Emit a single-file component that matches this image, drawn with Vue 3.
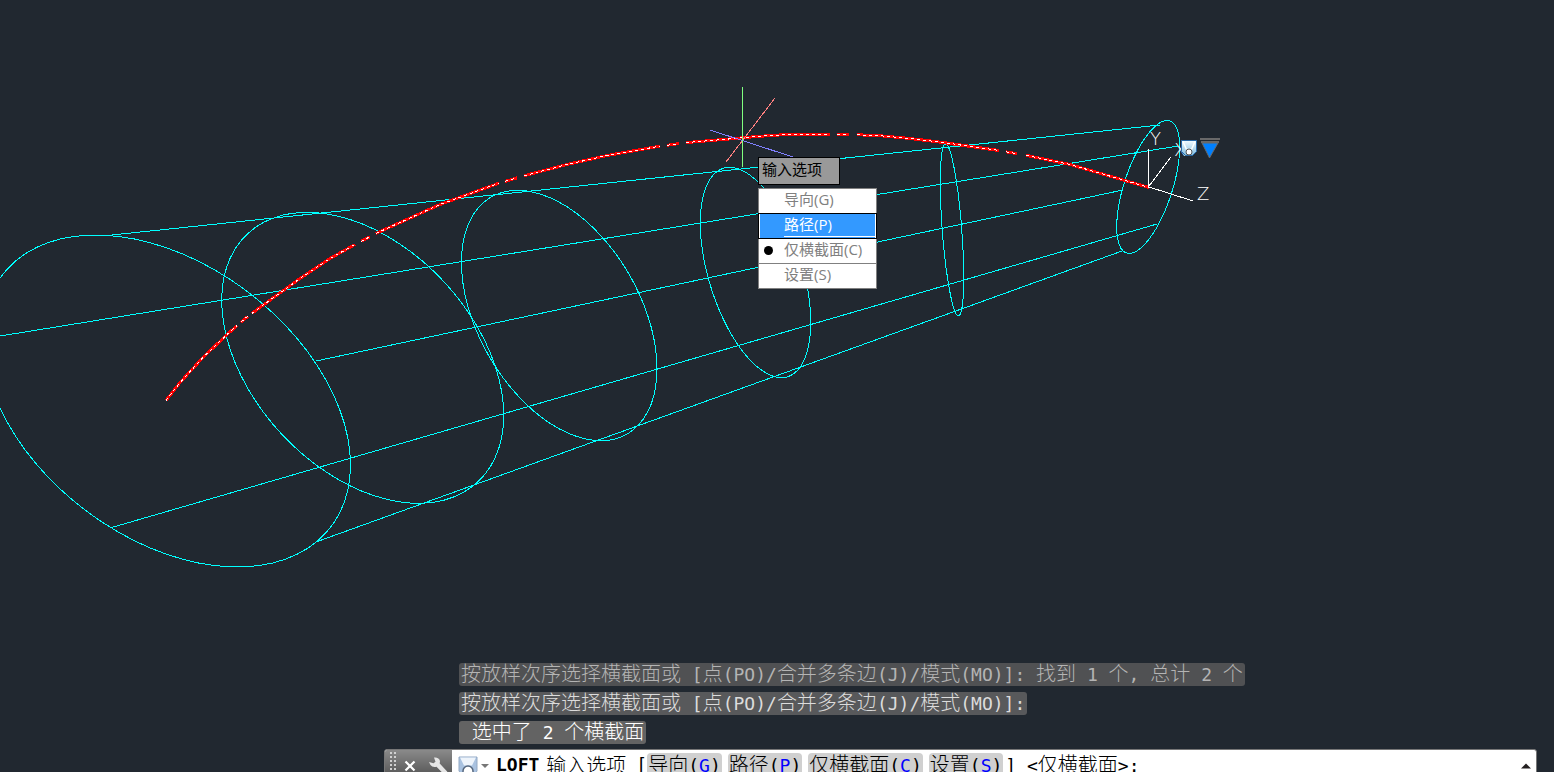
<template>
  <main class="workspace">
    <svg class="model" aria-label="Loft preview" role="img">
      <g class="wire">
        <polygon v-for="(s, i) in sections" :key="'s' + i" :points="sectionPoints(s)" />
        <line
          v-for="(e, i) in edges"
          :key="'e' + i"
          :x1="e[0]" :y1="e[1]" :x2="e[2]" :y2="e[3]"
        />
      </g>

      <!-- loft path, drawn as a highlighted dash-dot curve -->
      <g v-for="(points, i) in pathSegments" :key="'p' + i">
        <polyline class="path-glow" :points="points" />
        <polyline class="path-core" :points="points" />
      </g>

      <!-- 3D cursor -->
      <line class="axis-red" x1="775" y1="98" x2="726" y2="162" />
      <line class="axis-blue" x1="710" y1="130" x2="793" y2="157" />
      <line class="axis-green" x1="742.5" y1="87" x2="742.5" y2="167" />

      <!-- UCS icon -->
      <g class="ucs">
        <line x1="1148.5" y1="149" x2="1148.5" y2="187" />
        <line x1="1149" y1="187" x2="1193" y2="201" />
        <line x1="1149" y1="186" x2="1171" y2="157" />
        <text x="1150" y="145">Y</text>
        <text x="1174" y="156">X</text>
        <text x="1197" y="200">Z</text>
      </g>

      <!-- loft glyph and grip -->
      <defs>
        <linearGradient id="loftFill" x1="0" y1="0" x2="0" y2="1">
          <stop offset="0" stop-color="#f4fbff" />
          <stop offset="1" stop-color="#7dbbe0" />
        </linearGradient>
      </defs>
      <path d="M1181.5 140.5h15v11l-4 4h-7l-4-4z" fill="url(#loftFill)" stroke="#2768a8" />
      <path d="M1183 141.500l3.500 8h5l3.500-8" stroke="#fff" stroke-width="1.500" fill="none" />
      <circle cx="1189" cy="152" r="3" fill="#fff" stroke="#555" />
      <path d="M1200 139h20M1201 142h18" stroke="#696969" stroke-width="2" />
      <path d="M1202 143h16l-8.500 15z" fill="#0080ff" stroke="#696969" />
    </svg>

    <section class="dynamic-input">
      <h1 class="prompt-tip">输入选项</h1>
      <ul class="options">
        <li v-for="o in options" :key="o.key">
          <button
            type="button"
            :class="['option', { active: o.key === active }]"
            @click="active = o.key"
          >
            <span class="mark"><i v-if="o.key === current" class="dot"></i></span>
            <span class="label">{{ o.name }}({{ o.key }})</span>
          </button>
        </li>
      </ul>
    </section>

    <section class="console">
      <div class="history">
        <p v-for="(line, i) in history" :key="i" :class="['history-line', 'age-' + (history.length - 1 - i)]">
          <span v-for="(r, j) in runs(line)" :key="j" :class="{ latin: !isHan(r) }">{{ r }}</span>
        </p>
      </div>

      <div class="command-bar">
        <div class="handle">
          <span class="grip"></span>
          <button type="button" class="tool" aria-label="Close">
            <svg width="14" height="14" viewBox="0 0 14 14">
              <path d="M2.500 2.500l9 9M11.500 2.500l-9 9" stroke="#fff" stroke-width="2.200" />
            </svg>
          </button>
          <button type="button" class="tool" aria-label="Customize">
            <svg width="20" height="20" viewBox="0 0 20 20">
              <path
                d="M6 1.500q5-.5 6 3.500l-.3 2.500 7 7.500a2 2 0 0 1-3 3l-7.200-7.200q-4 1-6-1.800L1 6l4.500 1.300 2-1.600z"
                fill="#e6e6e6"
              />
            </svg>
          </button>
        </div>
        <div class="command-line">
          <button type="button" class="recent" aria-label="Recent commands">
            <svg width="32" height="20" viewBox="0 0 32 20">
              <path d="M1 1h18v14l-3 4H4l-3-4z" fill="#a9c2e0" stroke="#93a9c4" />
              <path d="M2 1.500h16l-4 8H6z" fill="#eef4fb" />
              <path d="M5 18v-3a5 5 0 0 1 10 0v3" fill="#fff" stroke="#56677e" stroke-width="1.500" />
              <path d="M23 8h8l-4 4z" fill="#777" />
            </svg>
          </button>
          <label for="command" class="prompt">
            <b class="latin">LOFT</b>
            <span>输入选项</span>
            <span class="latin">[</span>
          </label>
          <span class="keywords">
            <button v-for="o in options" :key="o.key" type="button" class="keyword" @click="active = o.key">
              {{ o.name }}<span class="latin">(<em>{{ o.key }}</em>)</span>
            </button>
          </span>
          <span class="default"><span class="latin">] &lt;</span>仅横截面<span class="latin">&gt;:</span></span>
          <input id="command" v-model="command" type="text" autocomplete="off" />
          <button type="button" class="expand" aria-label="Expand history">
            <svg width="10" height="6" viewBox="0 0 10 6"><path d="M0 5.500l5-5 5 5z" fill="#231f20" /></svg>
          </button>
        </div>
      </div>
    </section>
  </main>
</template>

<script setup>
import { ref } from 'vue'

const command = ref('')
const active = ref('P')
const current = 'C'

const options = [
  { name: '导向', key: 'G' },
  { name: '路径', key: 'P' },
  { name: '仅横截面', key: 'C' },
  { name: '设置', key: 'S' }
]

const history = [
  '按放样次序选择横截面或 [点(PO)/合并多条边(J)/模式(MO)]: 找到 1 个, 总计 2 个',
  '按放样次序选择横截面或 [点(PO)/合并多条边(J)/模式(MO)]:',
  ' 选中了 2 个横截面'
]

const isHan = (text) => /[\u4e00-\u9fff]/.test(text)
const runs = (text) => text.match(/[\u4e00-\u9fff]+|[^\u4e00-\u9fff]+/g)

// centre, half width, half height and skew of each projected circle
const sections = [
  { cx: 166.5, cy: 401, w: 184, h: 166, skew: 0.385 },
  { cx: 362.7, cy: 357.8, w: 141, h: 145.5, skew: 0.395 },
  { cx: 559.2, cy: 315.5, w: 97.8, h: 125.2, skew: 0.425 },
  { cx: 755.5, cy: 272.5, w: 55.2, h: 105.2, skew: 0.47 },
  { cx: 952, cy: 230, w: 11.7, h: 86, skew: 0.55 },
  { cx: 1148.2, cy: 187, w: 31.5, h: 66.5, skew: -0.6 }
]

const sectionPoints = ({ cx, cy, w, h, skew }) => {
  const side = Math.sqrt(1 - skew * skew)
  const points = []
  for (let i = 0; i < 72; i++) {
    const t = (i / 72) * Math.PI * 2
    const x = cx + w * Math.cos(t)
    const y = cy + h * (skew * Math.cos(t) + side * Math.sin(t))
    points.push(x.toFixed(1) + ',' + y.toFixed(1))
  }
  return points.join(' ')
}

const edges = [
  [112, 235, 1160, 125],
  [0, 336, 1178, 146],
  [316, 361, 1123, 190],
  [110, 528, 1157, 224],
  [316, 542, 1122, 251]
]

const curve = [
  [166, 400], [180, 382], [203, 357], [226, 335], [245, 318], [264, 304], [300, 278],
  [330, 258], [355, 244], [378, 232], [440, 204], [498, 183], [525, 175], [567, 164],
  [607, 155], [658, 146], [687, 142], [723, 139], [757, 136], [787, 134], [849, 134],
  [877, 135], [910, 138], [943, 142], [999, 150], [1027, 155], [1070, 164], [1149, 187]
]

const dashes = [
  [166, 237], [241, 248], [252, 355], [361, 370], [376, 499], [505, 517], [524, 660],
  [667, 679], [686, 830], [837, 849], [857, 999], [1006, 1017], [1026, 1149]
]

const curveY = (x) => {
  const i = Math.max(1, curve.findIndex((p) => p[0] >= x))
  const [x0, y0] = curve[i - 1]
  const [x1, y1] = curve[i]
  return y0 + ((y1 - y0) * (x - x0)) / (x1 - x0)
}

const pathSegments = dashes.map(([from, to]) => {
  const inner = curve.filter((p) => p[0] > from && p[0] < to)
  return [[from, curveY(from)], ...inner, [to, curveY(to)]]
    .map(([x, y]) => x + ',' + (y + 0.5).toFixed(1))
    .join(' ')
})
</script>

<style>
body {
  margin: 0;
  background: #212830;
}
</style>

<style scoped>
.workspace {
  position: relative;
  display: flex;
  flex-direction: column;
  justify-content: flex-end;
  height: 100vh;
  overflow: hidden;
  background: #212830;
  font-family: "Open Sans", "Noto Sans CJK SC", sans-serif;
}

button {
  padding: 0;
  border: none;
  background: none;
  font: inherit;
  color: inherit;
  cursor: pointer;
}

/* Model space */
.model {
  position: absolute;
  inset: 0;
  width: 100%;
  height: 100%;
}

.wire {
  fill: none;
  stroke: #00ffff;
  stroke-width: 1;
  shape-rendering: crispEdges;
}

.path-glow,
.path-core {
  fill: none;
  shape-rendering: crispEdges;
}

.path-glow {
  stroke: #ff0000;
  stroke-width: 3;
}

.path-core {
  stroke: #ffffff;
  stroke-width: 1;
  stroke-dasharray: 3 3;
}

.axis-red,
.axis-blue,
.axis-green {
  shape-rendering: crispEdges;
}

.axis-red { stroke: #ff8080; }
.axis-blue { stroke: #8080ff; }
.axis-green { stroke: #80ff80; }

.ucs line {
  stroke: #ffffff;
  shape-rendering: crispEdges;
}

.ucs text {
  fill: #ffffff;
  font-family: "DejaVu Sans", sans-serif;
  font-weight: 200;
  font-size: 18px;
}

/* Dynamic input */
.dynamic-input {
  position: absolute;
  left: 758px;
  top: 157px;
  font-size: 15px;
}

.prompt-tip {
  box-sizing: border-box;
  width: max-content;
  height: 28px;
  margin: 0 0 3px;
  padding: 0 17px 0 3px;
  border: 1px solid #000;
  background: #999;
  color: #000;
  font-size: 15px;
  font-weight: 400;
  line-height: 22px;
}

.options {
  box-sizing: border-box;
  width: 119px;
  margin: 0;
  padding: 0;
  list-style: none;
}

.options li + li {
  margin-top: -1px;
}

.option {
  position: relative;
  display: flex;
  box-sizing: border-box;
  width: 100%;
  height: 26px;
  border: 1px solid #808080;
  background: #fff;
  color: #808080;
  line-height: 21px;
  text-align: left;
}

.option.active {
  z-index: 1;
  border-color: #000;
  background: #3399ff;
  color: #fff;
  box-shadow: inset 1px 0 #fff, inset -1px 0 #fff;
}

.mark {
  display: flex;
  align-items: center;
  width: 25px;
  height: 22px;
}

.dot {
  width: 9px;
  height: 9px;
  margin-left: 5px;
  border-radius: 50%;
  background: #000;
}

.label {
  flex: 1;
  height: 22px;
}

.option.active .label {
  border-bottom: 1px solid #fff;
}

/* Console */
.console {
  position: relative;
  margin: 0 17px 0 384px;
  font-family: "Noto Sans CJK SC", sans-serif;
  font-size: 20px;
  font-weight: 300;
}

.latin {
  font-family: "DejaVu Sans Mono", monospace;
  font-size: 18px;
  font-weight: 400;
  white-space: pre;
}

.history {
  display: flex;
  flex-direction: column;
  align-items: flex-start;
  gap: 6px;
  margin: 0 0 5px 75px;
}

.history-line {
  height: 23px;
  margin: 0;
  padding: 0 2px;
  border-radius: 3px;
  line-height: 20px;
  white-space: pre;
}

.age-2 {
  background: #505153;
  color: #b4b4b4;
}

.age-1 {
  background: #58595b;
  color: #dcdcdc;
}

.age-0 {
  background: #636363;
  color: #fff;
}

.command-bar {
  display: flex;
  box-sizing: border-box;
  height: 34px;
  margin-bottom: -11px;
  border: 1px solid #777;
  border-radius: 3px;
  overflow: hidden;
  background: #fff;
}

.handle {
  display: flex;
  align-items: center;
  gap: 7px;
  width: 67px;
  background: linear-gradient(#8a8a8a, #4a4a4a);
}

.grip {
  width: 7px;
  height: 30px;
  margin-left: 4px;
  background: radial-gradient(circle, #d0d0d0 1px, transparent 1px) 0 0 / 4px 4px;
}

.tool {
  display: flex;
}

.tool + .tool {
  margin-left: 4px;
}

.command-line {
  display: flex;
  flex: 1;
  align-items: center;
  min-width: 0;
  color: #000;
  line-height: 22px;
  white-space: nowrap;
}

.recent {
  display: flex;
  margin-left: 6px;
}

.prompt {
  display: flex;
  gap: 7px;
  margin-left: 6px;
}

.prompt b {
  font-weight: 700;
}

.prompt .latin:last-child {
  margin-left: 3px;
}

.keywords {
  display: flex;
  gap: 6px;
}

.keyword {
  height: 26px;
  padding: 0 1px 2px;
  border-radius: 4px;
  background: #d0d0d0;
}

.keyword em {
  color: #0000ff;
  font-style: normal;
}

.default {
  margin-left: 2px;
}

.prompt,
.default {
  padding-bottom: 2px;
}

#command {
  flex: 1;
  min-width: 0;
  border: none;
  outline: none;
  background: none;
  font: inherit;
}

.expand {
  display: flex;
  margin-right: 5px;
}
</style>
